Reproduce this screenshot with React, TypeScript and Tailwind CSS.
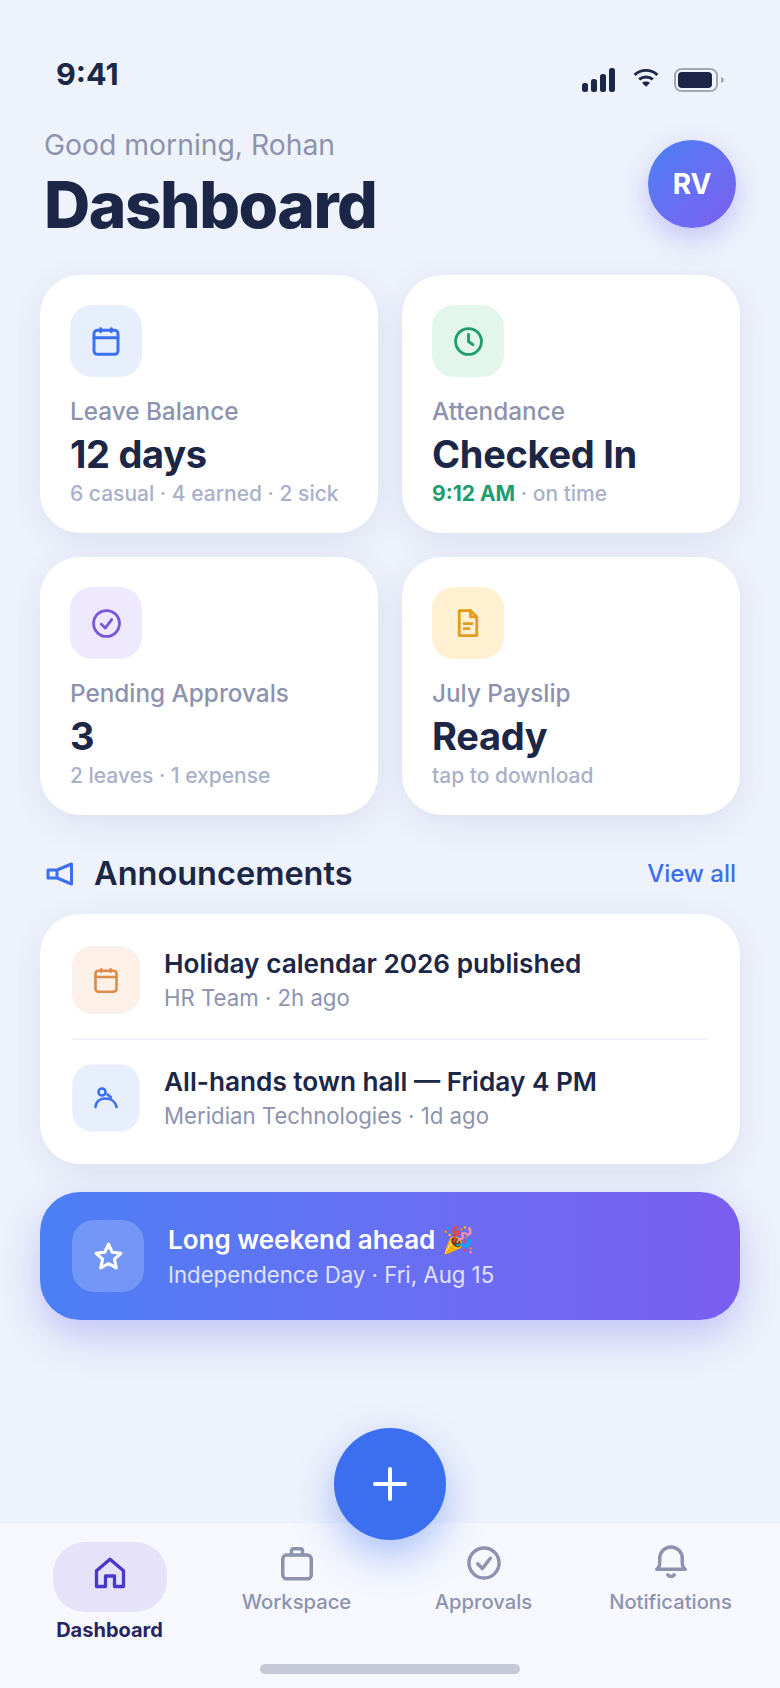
import React from "react";

const I = ({ s, c, w = 2, children }: { s: number; c: string; w?: number; children: React.ReactNode }) => (
  <svg width={s} height={s} viewBox="0 0 24 24" fill="none" stroke={c} strokeWidth={w} strokeLinecap="round" strokeLinejoin="round">
    {children}
  </svg>
);

const Calendar = ({ c, s = 32 }: { c: string; s?: number }) => (
  <I s={s} c={c} w={2.2}>
    <rect x="3" y="4" width="18" height="18" rx="2.500" />
    <path d="M8 2.800V5M16 2.800V5M3 9.500h18" />
  </I>
);

function StatCard({ bg, icon, label, value, sub }: { bg: string; icon: React.ReactNode; label: string; value: string; sub: React.ReactNode }) {
  return (
    <div className="h-[258px] rounded-[40px] bg-white pt-[30px] px-[30px] shadow-[0_8px_32px_rgba(60,80,160,0.1)]">
      <div className={`w-[72px] h-[72px] rounded-[22px] flex items-center justify-center ${bg}`}>{icon}</div>
      <div className="mt-[19px] text-[24.3px] leading-[30px] font-medium text-[#8d93ae]">{label}</div>
      <div className="mt-[5px] text-[38px] leading-[46px] font-bold tracking-[-0.3px] text-[#1c2646]">{value}</div>
      <div className="mt-[3px] text-[21px] leading-[28px] font-medium text-[#aab0c8]">{sub}</div>
    </div>
  );
}

function Row({ bg, icon, title, sub }: { bg: string; icon: React.ReactNode; title: string; sub: string }) {
  return (
    <div className="flex items-center gap-6">
      <div className={`w-[68px] h-[68px] rounded-[20px] flex items-center justify-center border border-[#f1f3fa] ${bg}`}>{icon}</div>
      <div>
        <div className="text-[26.2px] leading-[32px] font-semibold text-[#1c2646]">{title}</div>
        <div className="mt-[3px] text-[22.2px] leading-[30px] text-[#8d93ae]">{sub}</div>
      </div>
    </div>
  );
}

function NavItem({ icon, label }: { icon: React.ReactNode; label: string }) {
  return (
    <div className="flex flex-col items-center">
      <div className="h-[42px] flex items-center justify-center">{icon}</div>
      <div className="mt-[5px] text-[20.2px] leading-[26px] font-medium text-[#8d93ae]">{label}</div>
    </div>
  );
}

export default function App() {
  const grey = "#8d93ae";
  return (
    <div className="relative w-[780px] h-[1688px] overflow-hidden bg-[#eef2fb] flex flex-col font-['Inter',sans-serif]">
      {/* status bar */}
      <div className="h-[118px] pl-[56px] pr-[56px] flex justify-between shrink-0">
        <div className="pt-[54px] text-[30.5px] leading-[40px] font-bold text-[#1c2646]">9:41</div>
        <div className="pt-[68px] flex items-start">
          <svg width="33" height="24" viewBox="0 0 33 24">
            <rect x="0" y="15" width="6" height="9" rx="2.500" fill="#1c2646" />
            <rect x="9" y="11" width="6" height="13" rx="2.500" fill="#1c2646" />
            <rect x="18" y="6" width="6" height="18" rx="2.500" fill="#1c2646" />
            <rect x="27" y="0" width="6" height="24" rx="2.500" fill="#1c2646" />
          </svg>
          <svg width="26" height="20" viewBox="0 0 28 22" fill="none" stroke="#1c2646" strokeWidth="3.200" className="ml-[18px]">
            <path d="M1.500 7.500C8.500 1 19.500 1 26.500 7.500" />
            <path d="M6.500 12.500C10.500 9 17.500 9 21.500 12.500" />
            <path d="M14 20.500L9.500 16.200C12 14.500 16 14.500 18.500 16.200Z" fill="#1c2646" stroke="none" />
          </svg>
          <svg width="50" height="24" viewBox="0 0 50 24" className="ml-[15px]">
            <rect x="1" y="1" width="42" height="22" rx="6.500" fill="none" stroke="#a4a7b3" strokeWidth="2" />
            <rect x="4" y="4" width="34" height="16" rx="4" fill="#1c2646" />
            <path d="M47 9v6c1.500-.5 3-1.500 3-3s-1.500-2.500-3-3Z" fill="#a4a7b3" />
          </svg>
        </div>
      </div>

      {/* header */}
      <div className="h-[157px] shrink-0 pl-[44px] pr-[44px] flex justify-between">
        <div>
          <div className="mt-[9px] text-[28.3px] leading-[36px] text-[#8d93ae]">Good morning, Rohan</div>
          <div className="mt-[3px] text-[64px] leading-[78px] font-extrabold tracking-[-1.5px] text-[#1c2646]">Dashboard</div>
        </div>
        <div className="mt-[22px] w-[88px] h-[88px] rounded-full bg-gradient-to-br from-[#4a7ff5] to-[#7a5ef0] flex items-center justify-center text-white text-[28px] font-bold shadow-[0_10px_28px_rgba(90,90,235,0.3)]">RV</div>
      </div>

      {/* cards */}
      <div className="px-10 grid grid-cols-2 gap-6 shrink-0">
        <StatCard bg="bg-[#e7effd]" icon={<Calendar c="#3b6ff0" />} label="Leave Balance" value="12 days" sub="6 casual · 4 earned · 2 sick" />
        <StatCard
          bg="bg-[#e3f6ec]"
          icon={
            <I s={31} c="#1f9d6e" w={2.2}>
              <circle cx="12" cy="12" r="10" />
              <path d="M12 6.500V12l3.500 2.500" />
            </I>
          }
          label="Attendance"
          value="Checked In"
          sub={
            <>
              <span className="font-bold text-[#1f9d6e]">9:12 AM</span> · on time
            </>
          }
        />
        <StatCard
          bg="bg-[#eee9fd]"
          icon={
            <I s={31} c="#7a55dd" w={2.2}>
              <circle cx="12" cy="12" r="10" />
              <path d="M8 12.500l3 3 5-6.500" />
            </I>
          }
          label="Pending Approvals"
          value="3"
          sub="2 leaves · 1 expense"
        />
        <StatCard
          bg="bg-[#fff0d2]"
          icon={
            <I s={30} c="#e49a1f" w={2.2}>
              <path d="M14 2H5v20h14V7Z" />
              <path d="M14 2v5h5" />
              <path d="M8.800 12.500h6.400M8.800 16.500h4" />
            </I>
          }
          label="July Payslip"
          value="Ready"
          sub="tap to download"
        />
      </div>

      {/* section head */}
      <div className="mt-[33px] h-[52px] pl-[46px] pr-[44px] flex items-center justify-between shrink-0">
        <div className="flex items-center gap-[20px]">
          <svg width="28" height="24" viewBox="0 0 28 24" fill="none" stroke="#3b6ff0" strokeWidth="3" strokeLinejoin="round">
            <path d="M2 8h9L25.500 2v20L11 16H2Z" />
            <path d="M11 8v8" />
          </svg>
          <div className="text-[32.500px] leading-[40px] font-semibold text-[#1c2646]">Announcements</div>
        </div>
        <div className="text-[24px] font-medium text-[#3b6ff0]">View all</div>
      </div>

      {/* announcements */}
      <div className="mx-10 mt-[14px] h-[250px] rounded-[40px] bg-white px-8 py-8 shrink-0 shadow-[0_8px_32px_rgba(60,80,160,0.1)]">
        <Row bg="bg-[#fdf0e6]" icon={<Calendar c="#dd8a4b" s={28} />} title="Holiday calendar 2026 published" sub="HR Team · 2h ago" />
        <div className="my-6 h-[2px] bg-[#f1f3fa]" />
        <Row
          bg="bg-[#e7effd]"
          icon={
            <svg width="24" height="22" viewBox="0 0 24 22" fill="none" stroke="#3b6ff0" strokeWidth="2.600" strokeLinecap="round" strokeLinejoin="round">
              <circle cx="8" cy="5" r="3.500" />
              <path d="M1.500 20C2 14.500 6 11.500 11.500 11.500S21.500 14.500 22.500 20" />
              <path d="M13.500 7.500l3.500 3" />
            </svg>
          }
          title="All-hands town hall — Friday 4 PM"
          sub="Meridian Technologies · 1d ago"
        />
      </div>

      {/* banner */}
      <div className="mx-10 mt-[28px] h-[128px] rounded-[40px] px-8 bg-gradient-to-r from-[#4a7ff5] to-[#7a5ef0] flex items-center gap-6 shrink-0 shadow-[0_16px_40px_rgba(90,90,235,0.3)]">
        <div className="w-[72px] h-[72px] rounded-[22px] bg-white/20 flex items-center justify-center">
          <I s={31} c="#ffffff" w={2.4}>
            <path d="M12 2.500l2.900 6.200 6.700.8-5 4.600 1.400 6.700L12 17.400 6 20.800l1.400-6.700-5-4.600 6.700-.8Z" />
          </I>
        </div>
        <div>
          <div className="text-[26px] leading-[34px] font-semibold text-white">Long weekend ahead 🎉</div>
          <div className="mt-[3px] text-[22.2px] leading-[30px] text-white/80">Independence Day · Fri, Aug 15</div>
        </div>
      </div>

      {/* nav */}
      <div className="mt-auto h-[166px] bg-[#f6f8fe] border-t border-[#eceff8] shrink-0 px-4 pt-[19px] grid grid-cols-4 relative">
        <div className="flex flex-col items-center">
          <div className="w-[114px] h-[70px] pb-2 rounded-[32px] bg-[#e5e2fa] flex items-center justify-center">
            <I s={36} c="#4a37cc" w={2.2}>
              <path d="M3 21V10.500L12 2.800l9 7.700V21h-6v-7H9v7Z" />
            </I>
          </div>
          <div className="mt-[5px] text-[20px] leading-[26px] font-bold text-[#28245e]">Dashboard</div>
        </div>
        <NavItem
          label="Workspace"
          icon={
            <I s={38} c={grey} w={2.2}>
              <rect x="3" y="7" width="18" height="15" rx="2.500" />
              <path d="M8.500 7V4.500C8.500 3.500 9 3 10 3h4c1 0 1.500.5 1.500 1.500V7" />
            </I>
          }
        />
        <NavItem
          label="Approvals"
          icon={
            <I s={38} c={grey} w={2.2}>
              <circle cx="12" cy="12" r="9.500" />
              <path d="M8 12.500l3 3 5-6.500" />
            </I>
          }
        />
        <NavItem
          label="Notifications"
          icon={
            <I s={38} c={grey} w={2.2}>
              <path d="M3 16h18c-1.500-1-1.900-2.500-1.900-4.500V9a7.100 7.100 0 0 0-14.200 0v2.500c0 2-.4 3.500-1.900 4.500Z" />
              <path d="M10 19.500c1 1.300 3 1.300 4 0" />
            </I>
          }
        />
        <div className="absolute left-[260px] top-[141px] w-[260px] h-[10px] rounded-full bg-[#c6c9d8]" />
      </div>

      {/* fab */}
      <div className="absolute left-[334px] top-[1428px] w-[112px] h-[112px] rounded-full bg-[#3b6ff0] flex items-center justify-center shadow-[0_16px_40px_rgba(59,111,240,0.4)]">
        <svg width="34" height="34" viewBox="0 0 34 34" stroke="#ffffff" strokeWidth="4" strokeLinecap="round">
          <path d="M17 2v30M2 17h30" />
        </svg>
      </div>
    </div>
  );
}
